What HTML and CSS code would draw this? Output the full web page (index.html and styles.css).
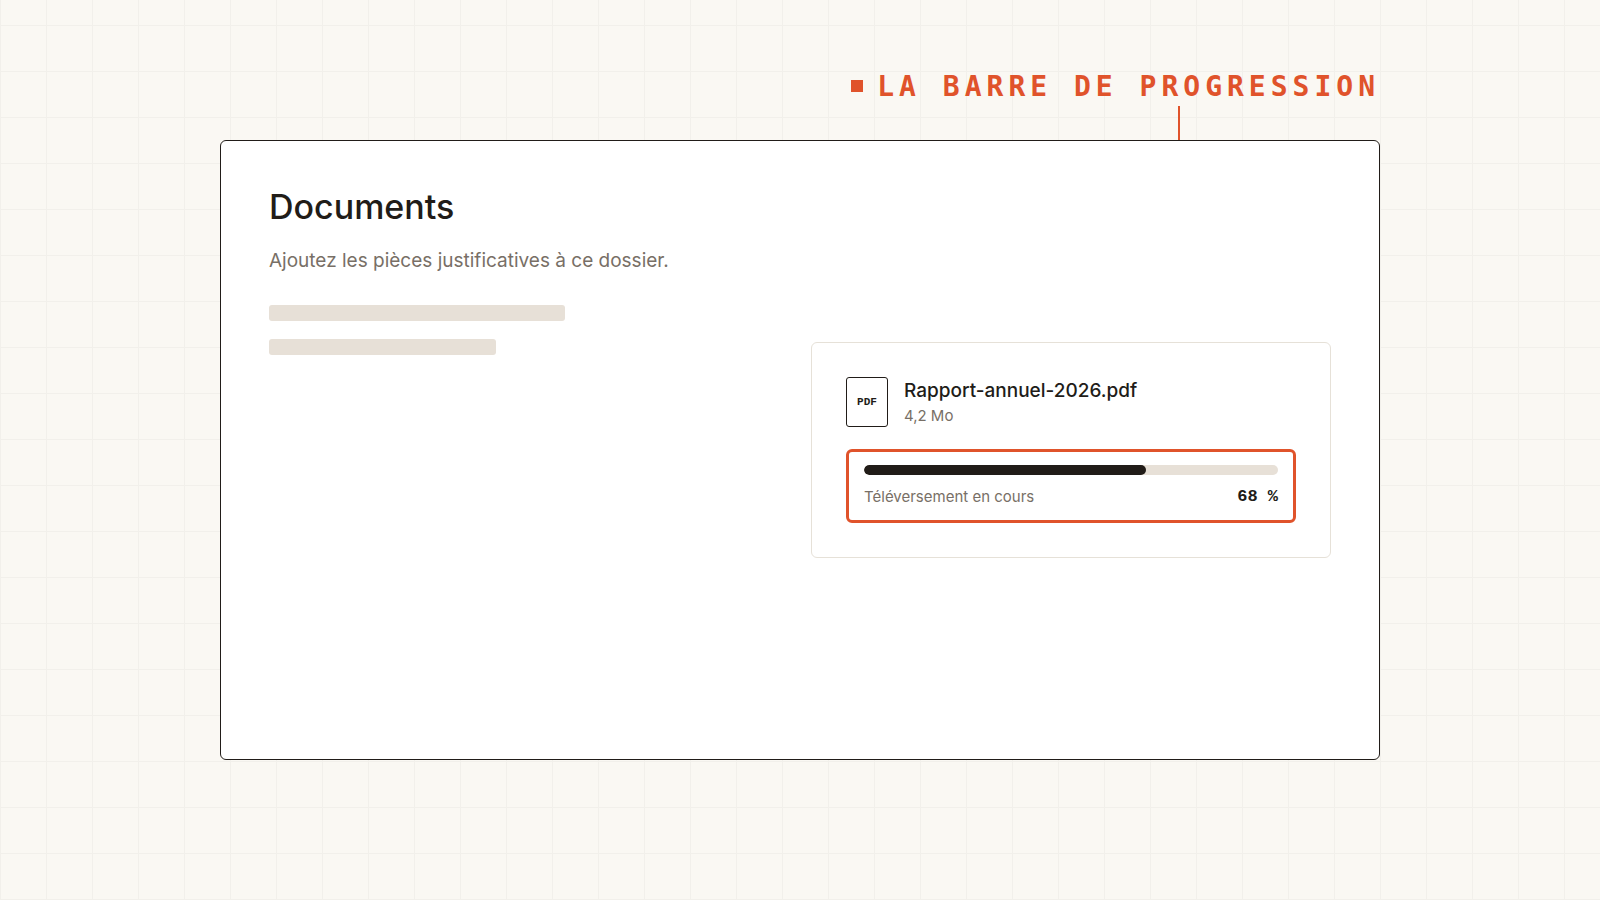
FILE: index.html
```html
<!DOCTYPE html>
<html lang="fr">
<head>
  <meta charset="UTF-8" />
  <meta name="viewport" content="width=device-width, initial-scale=1.0" />
  <title>Documents | Barre de progression</title>
  <link rel="stylesheet" href="styles.css">
</head>
<body>
  <div class="stage">
    <div class="callout">
      <span class="callout-square"></span>
      <span class="callout-text">LA BARRE DE PROGRESSION</span>
    </div>
    <div class="connector"></div>

    <main class="card">
      <section class="intro">
        <h1>Documents</h1>
        <p>Ajoutez les pièces justificatives à ce dossier.</p>
        <div class="skeleton"></div>
        <div class="skeleton short"></div>
      </section>

      <section class="upload">
        <div class="file">
          <div class="file-icon">PDF</div>
          <div>
            <div class="file-name">Rapport-annuel-2026.pdf</div>
            <div class="file-size">4,2 Mo</div>
          </div>
        </div>
        <div class="highlight">
          <progress id="televersement" value="68" max="100"></progress>
          <div class="status">
            <label for="televersement">Téléversement en cours</label>
            <span class="percent">68 %</span>
          </div>
        </div>
      </section>
    </main>
  </div>
</body>
</html>
```
FILE: styles.css
```css
* {
  box-sizing: border-box;
}
body {
  margin: 0;
  font-family: Inter, "Liberation Sans", sans-serif;
  color: #211c18;
  background-color: #faf8f3;
  background-image:
    linear-gradient(to right, #f2f0eb 1px, transparent 1px),
    linear-gradient(to bottom, #f2f0eb 1px, transparent 1px);
  background-size: 46px 46px;
  background-position: 0 25px;
}
.stage {
  display: flex;
  flex-direction: column;
  max-width: 1160px;
  min-height: 100vh;
  margin: 0 auto;
  padding: 66px 0 140px;
}
.callout {
  display: flex;
  justify-content: flex-end;
  align-items: center;
  gap: 14px;
  color: #e0532b;
}
.callout-square {
  width: 12px;
  height: 12px;
  background: #e0532b;
}
.callout-text {
  padding-top: 2px;
  font-family: "DejaVu Sans Mono", monospace;
  font-size: 28px;
  font-weight: bold;
  line-height: 38px;
  letter-spacing: 5px;
}
.connector {
  align-self: flex-end;
  width: 2px;
  height: 34px;
  margin-right: 200px;
  background: #e0532b;
}
.card {
  flex: 1;
  display: grid;
  grid-template-columns: 1fr 520px;
  gap: 48px;
  padding: 48px;
  background: white;
  border: 1px solid #211c18;
  border-radius: 6px;
}
.intro h1 {
  margin: 0 0 20px;
  font-size: 34px;
  font-weight: 500;
  line-height: 36px;
}
.intro p {
  margin: 0 0 28px;
  font-size: 19px;
  line-height: 32px;
  color: #786f66;
}
.skeleton {
  width: 60%;
  height: 16px;
  margin-bottom: 18px;
  background: #e7e0d7;
  border-radius: 3px;
}
.skeleton.short {
  width: 46%;
}
.upload {
  align-self: center;
  padding: 34px;
  border: 1px solid #e6e1d8;
  border-radius: 6px;
}
.file {
  display: flex;
  align-items: center;
  gap: 16px;
  margin-bottom: 22px;
}
.file-icon {
  display: flex;
  align-items: center;
  justify-content: center;
  width: 42px;
  height: 50px;
  border: 1px solid #211c18;
  border-radius: 3px;
  font-family: "Liberation Mono", monospace;
  font-size: 11px;
  font-weight: bold;
}
.file-name {
  font-size: 19px;
  font-weight: 500;
  line-height: 28px;
}
.file-size {
  font-size: 15px;
  line-height: 22px;
  color: #786f66;
}
.highlight {
  padding: 13px 15px;
  border: 3px solid #e0532b;
  border-radius: 6px;
}
progress {
  display: block;
  width: 100%;
  height: 10px;
  border: none;
  border-radius: 5px;
  background: #e7e0d7;
  overflow: hidden;
  appearance: none;
}
progress::-webkit-progress-bar {
  background: #e7e0d7;
}
progress::-webkit-progress-value {
  background: #211c18;
  border-radius: 5px;
}
.status {
  display: flex;
  justify-content: space-between;
  margin-top: 12px;
  font-size: 15px;
  line-height: 20px;
  color: #786f66;
}
.percent {
  font-family: "Liberation Mono", monospace;
  font-size: 17px;
  font-weight: bold;
  color: #211c18;
}
```
